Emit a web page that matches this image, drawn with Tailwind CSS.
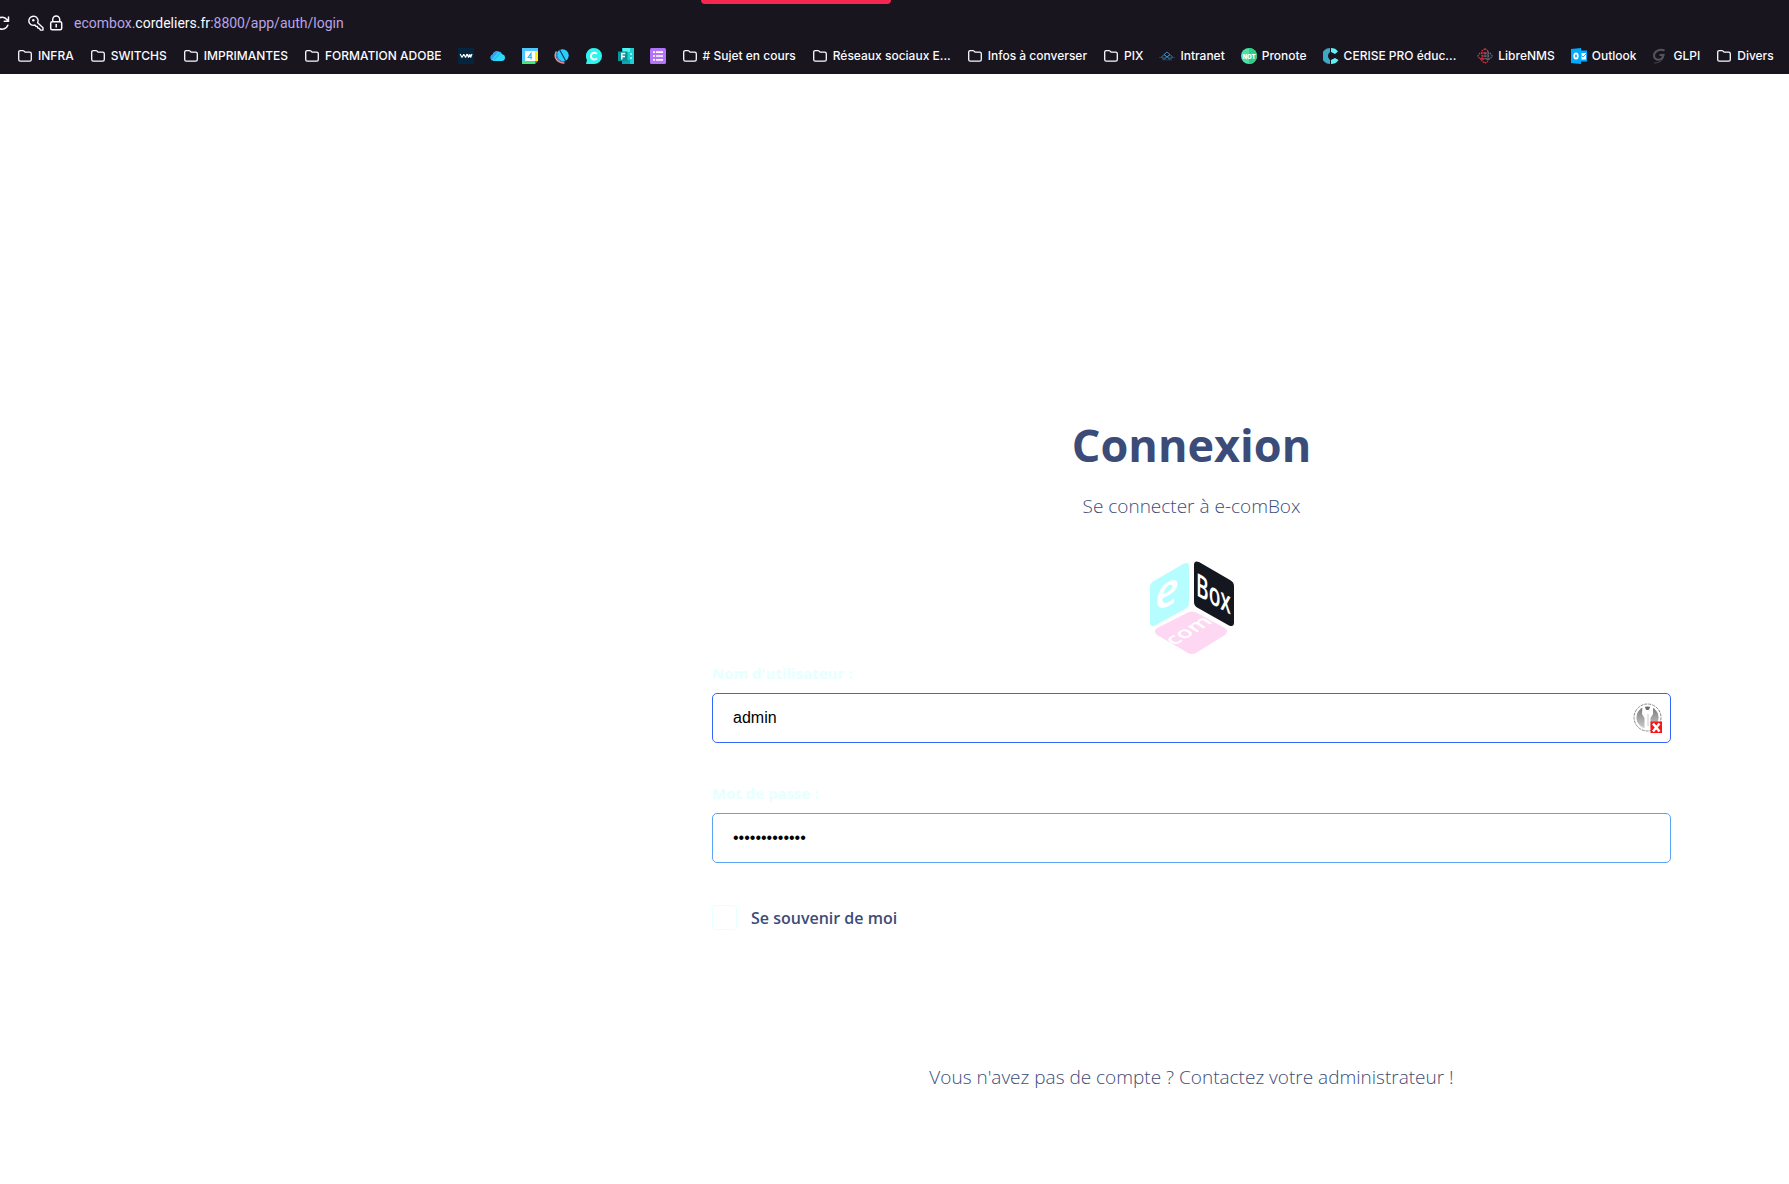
<!DOCTYPE html>
<html lang="fr">
<head>
  <meta charset="UTF-8" />
  <title>e-comBox - Connexion</title>
  <script src="https://cdn.jsdelivr.net/npm/@tailwindcss/browser@4"></script>
</head>
<body class="min-h-screen bg-white flex flex-col overflow-x-hidden">
  <!-- shared icons -->
  <svg class="hidden">
    <symbol id="folder" viewBox="0 0 16 16">
      <path d="M1.700 4.200c0-.9.7-1.600 1.600-1.600h2.600c.5 0 .9.200 1.200.5l1 1.100h4.600c.9 0 1.600.7 1.600 1.600v5.800c0 .9-.7 1.600-1.600 1.600H3.300c-.9 0-1.600-.7-1.600-1.600z" fill="none" stroke="currentColor" stroke-width="1.3" />
    </symbol>
  </svg>

  <header class="relative bg-[#18151f] text-[#fbfbfe] font-['Inter',sans-serif] pb-[7px]">
    <div class="absolute top-0 left-[39.2%] w-[190px] h-1 bg-[#f5264f] rounded-b"></div>

    <!-- address bar -->
    <div class="h-[45px] flex items-center">
      <button type="button" title="Actualiser" class="w-[10px] h-4 overflow-hidden flex justify-end">
        <svg class="w-4 h-4 shrink-0" viewBox="0 0 16 16" fill="none" stroke="currentColor" stroke-width="1.5" stroke-linecap="round" stroke-linejoin="round">
          <path d="M13.800 10.200A6 6 0 1 1 12.600 4.200L14.200 6M14.500 2v4.300h-4.300" />
        </svg>
      </button>
      <svg class="w-4 h-4 ml-[18px]" viewBox="0 0 16 16" fill="none" stroke="currentColor" stroke-width="1.4" stroke-linejoin="round">
        <path d="M9.600 7.800A4.600 4.600 0 1 0 5.200 10.400L6.900 10l1 1.300 1.500.2.400 1.500 1.600.4 1.100 1.700H15v-2.300z" />
        <circle cx="5.300" cy="5.300" r="1.200" fill="currentColor" stroke="none" />
      </svg>
      <svg class="w-4 h-4 ml-1" viewBox="0 0 16 16" fill="none" stroke="currentColor" stroke-width="1.5">
        <rect x="2.700" y="6.700" width="11" height="8" rx="1.500" />
        <path d="M4.700 6.700V4.500a3.500 3.500 0 0 1 7 0v2.200M8.200 9v3.500" />
      </svg>
      <a href="#" class="ml-[10px] text-sm font-['Roboto',sans-serif] text-[#b9a4e6]">ecombox.<span class="text-[#fbfbfe]">cordeliers.fr</span>:8800/app/auth/login</a>
    </div>

    <!-- bookmarks -->
    <nav class="h-[22px] pl-[17px] flex items-center gap-4 text-xs font-medium whitespace-nowrap">
      <a href="#" class="flex items-center gap-[5px]"><svg class="w-4 h-4"><use href="#folder" /></svg>INFRA</a>
      <a href="#" class="flex items-center gap-[5px]"><svg class="w-4 h-4"><use href="#folder" /></svg>SWITCHS</a>
      <a href="#" class="flex items-center gap-[5px]"><svg class="w-4 h-4"><use href="#folder" /></svg>IMPRIMANTES</a>
      <a href="#" class="flex items-center gap-[5px]"><svg class="w-4 h-4"><use href="#folder" /></svg>FORMATION ADOBE</a>
      <a href="#" title="VW">
        <svg class="w-4 h-4" viewBox="0 0 16 16"><path fill="#04253d" d="M0 0h16v16H0z" /><path d="M2.200 6l1.800 3.500L5.800 6.300l1.800 3.200L9 6M9.500 6l1 3.500L12 6.300l.6 3.200L14 6" fill="none" stroke="#fff" stroke-width="1.200" stroke-linejoin="bevel" /></svg>
      </a>
      <a href="#" title="Cloud">
        <svg class="w-4 h-4" viewBox="0 0 16 16"><path fill="#2fd9fb" d="M3.500 13A3.400 3.400 0 0 1 2.600 6.500 5.400 5.400 0 0 1 12.300 6.200 3.500 3.500 0 0 1 12.500 13z" /><path fill="#3f9cf6" d="M2 12.500A3.400 3.400 0 0 1 2.600 6.500 5.400 5.400 0 0 1 7.500 3C9.500 5 3 8 2 12.500z" /><path d="M4 12.500C5 9 8.500 8.500 10 4.500" fill="none" stroke="#22bdee" stroke-width="1.300" /></svg>
      </a>
      <a href="#" title="Agenda">
        <svg class="w-4 h-4" viewBox="0 0 16 16"><path fill="#50c8ff" d="M0 0h16v16H0z" /><path fill="#ffee10" d="M13 3h3v10h-3z" /><path fill="#43e87c" d="M0 13h13v3H0z" /><path fill="#f4473b" d="M13 13h3l-3 3z" /><path fill="#18151f" d="M16 13v3h-3z" /><path fill="#fff" d="M3 3h10v10H3z" /><path d="M9 11.500V5.500L6.200 9.500h4" fill="none" stroke="#28bbf4" stroke-width="1.200" /></svg>
      </a>
      <a href="#" title="Web">
        <svg class="w-4 h-4" viewBox="0 0 16 16"><path d="M2.500 3.500C-.5 8 2 15 10.500 15" fill="none" stroke="#f58b93" stroke-width="1.500" /><circle cx="8.500" cy="7.500" r="6.200" fill="#28cffc" /><path d="M5.500 1.500l6.500 12" stroke="#123a5c" stroke-width="1.200" /><path d="M3.200 4.500c-1 4 0 6.500 4 8.500" fill="none" stroke="#2487d0" stroke-width="1.200" /></svg>
      </a>
      <a href="#" title="Canal">
        <svg class="w-4 h-4" viewBox="0 0 16 16"><path fill="#2ff4ee" d="M8 0a8 8 0 1 1 0 16H0l1-4A8 8 0 0 1 8 0z" /><path d="M10.800 5.800a3.400 3.400 0 1 0 0 4.600" fill="none" stroke="#fff" stroke-width="2" /></svg>
      </a>
      <a href="#" title="Forms">
        <svg class="w-4 h-4" viewBox="0 0 16 16"><path fill="#18d2d4" d="M4 0h12v16H4z" /><path fill="#0aa6ad" d="M4 12h8v4H4z" /><path fill="#55f4ef" d="M5 0h7v4H5z" /><path fill="#07939b" d="M0 3.500h9.500v9.500H0z" /><path d="M3.800 11.500v-6h3.500M3.800 8.500H7" fill="none" stroke="#fff" stroke-width="1.500" /><path d="M12 6h2M12 10h2" stroke="#c8ffff" stroke-width="1.600" /></svg>
      </a>
      <a href="#" title="Formulaire">
        <svg class="w-4 h-4" viewBox="0 0 16 16"><rect width="16" height="16" rx="1.500" fill="#b573fb" /><path d="M3 4.200h2M6 4.200h7M3 8h2M6 8h7M3 11.800h2M6 11.800h7" stroke="#fff" stroke-width="1.700" /></svg>
      </a>
      <a href="#" class="flex items-center gap-[5px]"><svg class="w-4 h-4"><use href="#folder" /></svg># Sujet en cours</a>
      <a href="#" class="flex items-center gap-[5px]"><svg class="w-4 h-4"><use href="#folder" /></svg>Réseaux sociaux E...</a>
      <a href="#" class="flex items-center gap-[5px]"><svg class="w-4 h-4"><use href="#folder" /></svg>Infos à converser</a>
      <a href="#" class="flex items-center gap-[5px]"><svg class="w-4 h-4"><use href="#folder" /></svg>PIX</a>
      <a href="#" class="flex items-center gap-[5px]">
        <svg class="w-4 h-4" viewBox="0 0 16 16" fill="none" stroke="#3f8fc4"><path d="M5 6.500l3-2.500 3 2.500L8 9zM2.500 9L5 6.500 8 9l3-2.500L13.500 9 11 11.500 8 9l-3 2.500z" stroke-width=".9" /><path d="M0 9.500h16M3 11.800h10" stroke="#285a7c" stroke-width=".6" /></svg>Intranet
      </a>
      <a href="#" class="flex items-center gap-[5px]">
        <svg class="w-4 h-4" viewBox="0 0 16 16"><circle cx="8" cy="8" r="8" fill="#4be3a4" /><path d="M8 0a8 8 0 0 1 0 16z" fill="#2fcb88" /><text x="8" y="10.500" text-anchor="middle" font-family="Inter" font-size="6" font-weight="900" fill="#fff">NOT</text></svg>Pronote
      </a>
      <a href="#" class="flex items-center gap-[5px] pr-[5px]">
        <svg class="w-4 h-4" viewBox="0 0 16 16"><path fill="#3fa9c4" d="M7 0v4a5 5 0 0 0 0 8v4A8 8 0 0 1 7 0z" /><path fill="#5ff0f4" d="M8 0c3 0 5.500 1 7 3.500L12 6 8 4zM8 16c3 0 5.500-1 7.500-4L12 10l-4 2z" /></svg>CERISE PRO éduc...
      </a>
      <a href="#" class="flex items-center gap-[5px]">
        <svg class="w-4 h-4" viewBox="0 0 16 16" fill="none" stroke-width="1.300" stroke-dasharray="1.700 .8"><path stroke="#e0303f" d="M8 5H3L.800 8 3 11h5M8 .800L5 3v10l3 2.200 3-2.200M8 .800L11 3M5 8h3" /><path stroke="#6c6874" d="M8 5h5l2.200 3L13 11H8M11 3v10M8 5v6M8 8h5" /></svg>LibreNMS
      </a>
      <a href="#" class="flex items-center gap-[5px]">
        <svg class="w-4 h-4" viewBox="0 0 16 16"><path fill="#00aaff" d="M0 1l10-1v16L0 15zM9 2.500h7v11H9z" /><path fill="#fff" d="M10.500 5H15v6.500h-4.500z" /><path d="M10.500 7.500l1.700 1.500L15 6" fill="none" stroke="#00aaff" /><ellipse cx="5" cy="8" rx="1.800" ry="2.700" fill="none" stroke="#fff" stroke-width="1.800" /></svg>Outlook
      </a>
      <a href="#" class="flex items-center gap-[5px]">
        <svg class="w-4 h-4" viewBox="0 0 16 16" fill="none" stroke="#56535b"><path d="M12.500 2.500C8 .500 2 3 2 7.500c0 4 4.500 5.500 8 3L11.500 7H7.500" stroke-width="2" /><path d="M2 15c5 0 8-2 9.500-6" stroke-width=".8" /></svg>GLPI
      </a>
      <a href="#" class="flex items-center gap-[5px]"><svg class="w-4 h-4"><use href="#folder" /></svg>Divers</a>
    </nav>
  </header>

  <main class="grid grid-cols-[712fr_959fr_118fr] font-['Open_Sans',sans-serif] text-[#3c4c78]">
    <form class="col-start-2 pt-[340px] flex flex-col">
      <h1 class="text-center text-[45px] leading-[62px] font-bold">Connexion</h1>
      <p class="mt-[14px] text-center text-[19px] leading-8 font-light">Se connecter à e-comBox</p>

      <svg class="mt-[39px] w-[84px] h-[96px] self-center" viewBox="0 0 84 96" font-family="Open Sans" fill="#fff">
        <path fill="#b5fdff" d="M34 2.500q5-2 5 3V42q0 4-4 6L5 64.500q-5 2-5-3V26q0-4 4-6z" />
        <path fill="#141720" d="M49 1q-5-2-5 3v37q0 4 4 6l31 17.500q5 2 5-3V25q0-4-4-6z" />
        <path fill="#fed7f3" d="M38 51.500q4-2 8 0l28 15q6 4 0 8L46 92q-4 2-8 0L8 74.500q-6-4 0-8z" />
        <text transform="matrix(1 -.4 0 1 5 50)" font-size="44" font-weight="600" font-style="italic">e</text>
        <text transform="matrix(.6 .34 0 1 46 34)" font-size="32" font-weight="600">Box</text>
        <text transform="matrix(.87 -.52 .75 .5 24 85)" font-size="22" font-weight="600">com</text>
      </svg>

      <label for="username" class="mt-1 text-[15px] leading-6 font-bold text-[#e6ffff]">Nom d'utilisateur :</label>
      <div class="relative mt-2">
        <input id="username" type="text" value="admin" class="block w-full h-[50px] px-5 rounded-[5px] border border-[#3366ff] bg-white text-black text-base font-['Liberation_Sans',sans-serif] focus:outline-none" />
        <!-- password manager badge -->
        <svg class="absolute right-2 top-[10px] w-[30px] h-[30px]" viewBox="0 0 30 30">
          <defs><linearGradient id="steel" x1="0" y1="0" x2="0" y2="1"><stop stop-color="#777" /><stop offset="1" stop-color="#ccc" /></linearGradient></defs>
          <circle cx="14.500" cy="14.500" r="13.500" fill="#fff" stroke="#888" stroke-dasharray="3 1" />
          <circle cx="14.500" cy="14.500" r="11" fill="url(#steel)" />
          <path fill="#fff" d="M9.500 3l2.500 1 1 3h3l1-3 3-1v8l-2.500 4v11h-6V15L9 11z" />
          <path fill="#666" d="M12 4h5l-2.500 3z" /><path d="M15 11v12" stroke="#ccc" />
          <path fill="#ff1212" d="M17.500 18.500H29V30H17.500z" />
          <path d="M20 20.500l6.500 8M26.500 20.500l-6.500 8" stroke="#fff" stroke-width="2.500" />
        </svg>
      </div>

      <label for="password" class="mt-[38px] text-[15px] leading-6 font-bold text-[#e6ffff]">Mot de passe :</label>
      <input id="password" type="password" value="motdepasse123" class="mt-2 block w-full h-[50px] px-5 rounded-[5px] border border-[#59a6f5] bg-white text-black text-base font-['Liberation_Sans',sans-serif] focus:outline-none" />

      <div class="mt-[42px] flex items-center gap-[14px]">
        <input id="remember" type="checkbox" class="appearance-none size-[25px] rounded border border-[#e6ffff] bg-white" />
        <label for="remember" class="text-base leading-6 font-semibold">Se souvenir de moi</label>
      </div>

      <p class="mt-[131px] text-center text-[19px] leading-8 font-light">Vous n'avez pas de compte ? Contactez votre administrateur !</p>
    </form>
  </main>
</body>
</html>
